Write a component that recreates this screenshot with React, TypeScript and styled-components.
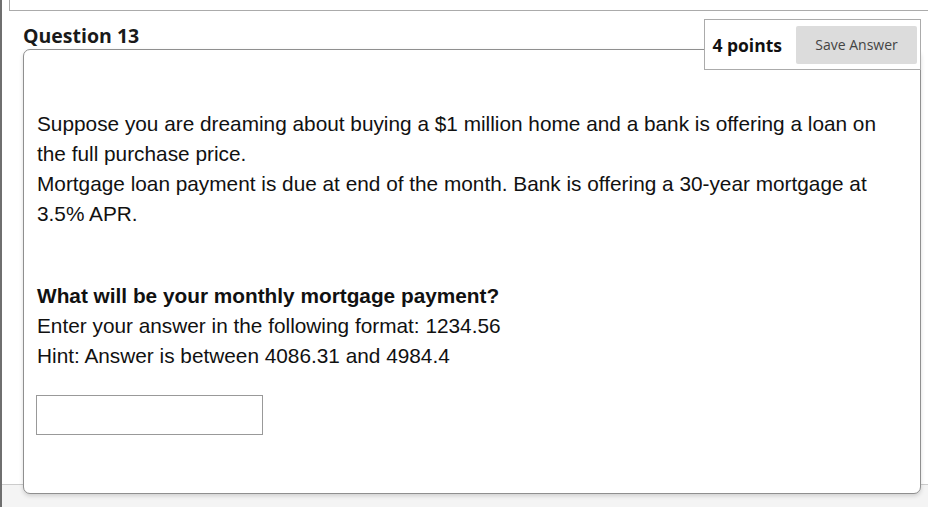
import { createGlobalStyle } from "styled-components";
import styled from "styled-components";

const GlobalStyle = createGlobalStyle`
  html, body {
    margin: 0;
    padding: 0;
    background: #ffffff;
  }
  body {
    font-family: "Open Sans", "Liberation Sans", sans-serif;
    overflow: hidden;
  }
`;

const App = () => {
  return (
    <Page>
      <GlobalStyle />
      <PrevBox />
      <Content>
        <Header>
          <Title>Question 13</Title>
          <PointsBox>
            <Points>4 points</Points>
            <SaveButton type="button">Save Answer</SaveButton>
          </PointsBox>
        </Header>
        <Card>
          <Text>
            Suppose you are dreaming about buying a $1 million home and a bank is offering a loan on
            the full purchase price.
            <br />
            Mortgage loan payment is due at end of the month. Bank is offering a 30-year mortgage at
            3.5% APR.
          </Text>
          <Spacer />
          <Text>
            <strong>What will be your monthly mortgage payment?</strong>
            <br />
            Enter your answer in the following format: 1234.56
            <br />
            Hint: Answer is between 4086.31 and 4984.4
          </Text>
          <AnswerInput type="text" />
        </Card>
      </Content>
      <Footer />
    </Page>
  );
};

export default App;

const Page = styled.div`
  width: 928px;
  height: 507px;
  box-sizing: border-box;
  border-left: 2px solid #6f6f6f;
  display: flex;
  flex-direction: column;
  overflow: hidden;
`;

const PrevBox = styled.div`
  margin-left: 7px;
  height: 10px;
  border: 1px solid #ababab;
  border-top: none;
  border-right: none;
  flex-shrink: 0;
`;

const Content = styled.div`
  padding: 0 7px 0 21px;
  display: flex;
  flex-direction: column;
  position: relative;
  z-index: 1;
`;

const Header = styled.div`
  position: relative;
  z-index: 2;
  display: flex;
  justify-content: space-between;
  align-items: flex-start;
  padding-top: 8px;
`;

const Title = styled.h2`
  margin: 4px 0 0 0;
  font-family: "Open Sans", sans-serif;
  font-size: 19.5px;
  font-weight: 700;
  color: #1a1a1a;
  line-height: 26px;
`;

const PointsBox = styled.div`
  display: flex;
  align-items: center;
  gap: 14px;
  height: 51px;
  box-sizing: border-box;
  padding: 0 3px 0 7px;
  background: #ffffff;
  border: 1px solid #ababab;
`;

const Points = styled.span`
  font-family: "Open Sans", sans-serif;
  font-size: 17.5px;
  font-weight: 700;
  color: #111111;
`;

const SaveButton = styled.button`
  height: 38px;
  width: 121px;
  border: none;
  border-radius: 2px;
  background: #dcdcdc;
  color: #444444;
  font-family: "Open Sans", sans-serif;
  font-size: 14px;
  cursor: pointer;
`;

const Card = styled.div`
  margin-top: -21px;
  margin-bottom: -10px;
  height: 445px;
  box-sizing: border-box;
  background: #ffffff;
  border: 1px solid #8f8f8f;
  border-radius: 7px;
  box-shadow: 0 2px 4px rgba(0, 0, 0, 0.15);
  padding: 59px 20px 0 13px;
`;

const Text = styled.p`
  margin: 0;
  font-family: "Liberation Sans", Arial, sans-serif;
  font-size: 20.8px;
  line-height: 30px;
  color: #111111;

  strong {
    font-weight: 700;
  }
`;

const Spacer = styled.div`
  height: 52px;
`;

const AnswerInput = styled.input`
  display: block;
  margin: 24px 0 0 -1px;
  width: 227px;
  height: 40px;
  box-sizing: border-box;
  border: 1px solid #999999;
  border-radius: 0;
  outline: none;
`;

const Footer = styled.div`
  flex: 1;
  background: #f4f4f4;
  border-top: 1px solid #cccccc;
`;
